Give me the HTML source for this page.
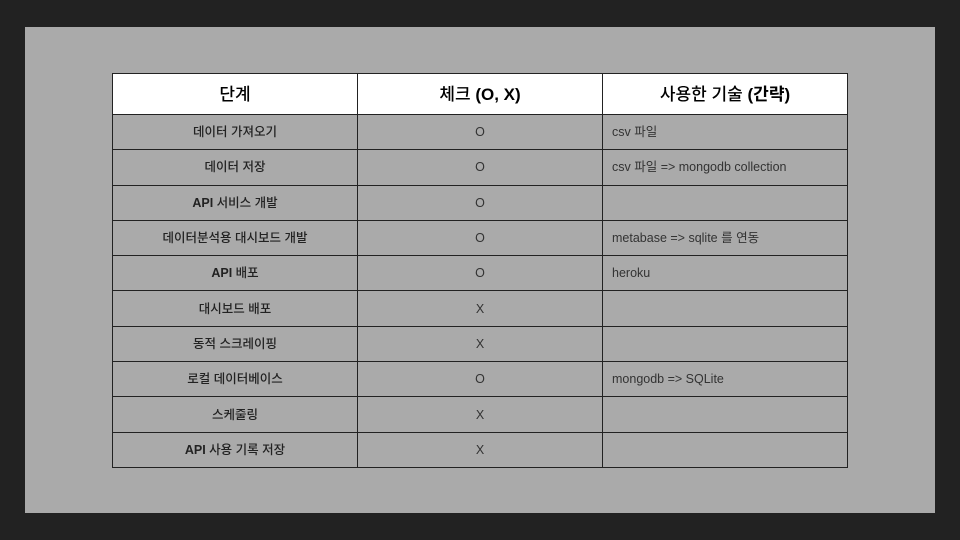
<!DOCTYPE html>
<html><head><meta charset="utf-8"><style>
*{margin:0;padding:0;box-sizing:border-box}
body{width:960px;height:540px;background:#222;position:relative;overflow:hidden;font-family:"Liberation Sans","Noto Sans CJK KR",sans-serif}
.slide{position:absolute;left:25px;top:27px;width:910px;height:486px;background:#aaa}
.t{position:absolute;left:112px;top:73px;width:736px;border:1px solid #222;border-bottom:none}
.r{display:flex;height:35.3px;border-bottom:1px solid #222}
.r.h{height:41px;background:#fff}
.c{width:245px;display:flex;align-items:center;justify-content:center;font-size:12.5px;line-height:14px;color:#222;border-right:1px solid #222}
.c:first-child{width:245px}
.c:nth-child(2){width:245px;color:#333}
.c:last-child{border-right:none;width:244px;justify-content:flex-start;padding-left:9px;color:#333}
.h .c{font-size:17px;color:#000;font-weight:500;line-height:20px;padding-top:2px}
.h .c:last-child{justify-content:center;padding-left:0;color:#000}
.c:first-child{font-weight:500}
</style></head><body>
<div class="slide"></div>
<div class="t">
<div class="r h"><div class="c">단계</div><div class="c">체크&nbsp;<b>(O, X)</b></div><div class="c">사용한 기술&nbsp;<b>(간략)</b></div></div>
<div class="r"><div class="c">데이터 가져오기</div><div class="c">O</div><div class="c">csv 파일</div></div>
<div class="r"><div class="c">데이터 저장</div><div class="c">O</div><div class="c">csv 파일 =&gt; mongodb collection</div></div>
<div class="r"><div class="c"><b>API</b>&nbsp;서비스 개발</div><div class="c">O</div><div class="c"></div></div>
<div class="r"><div class="c">데이터분석용 대시보드 개발</div><div class="c">O</div><div class="c">metabase =&gt; sqlite 를 연동</div></div>
<div class="r"><div class="c"><b>API</b>&nbsp;배포</div><div class="c">O</div><div class="c">heroku</div></div>
<div class="r"><div class="c">대시보드 배포</div><div class="c">X</div><div class="c"></div></div>
<div class="r"><div class="c">동적 스크레이핑</div><div class="c">X</div><div class="c"></div></div>
<div class="r"><div class="c">로컬 데이터베이스</div><div class="c">O</div><div class="c">mongodb =&gt; SQLite</div></div>
<div class="r"><div class="c">스케줄링</div><div class="c">X</div><div class="c"></div></div>
<div class="r"><div class="c"><b>API</b>&nbsp;사용 기록 저장</div><div class="c">X</div><div class="c"></div></div>
</div>
</body></html>
